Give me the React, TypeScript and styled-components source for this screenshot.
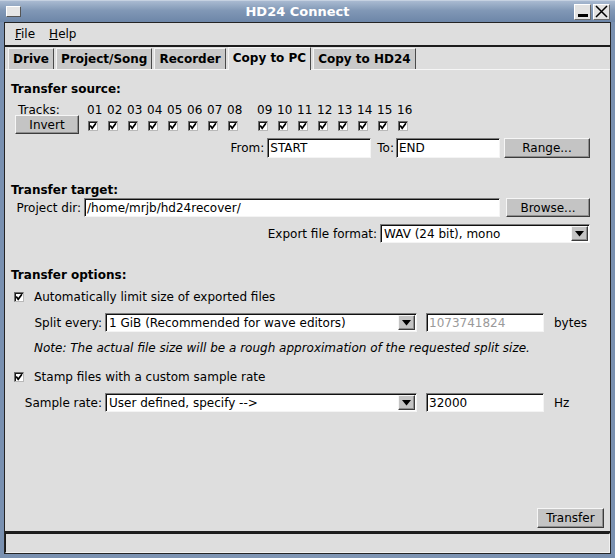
import styled, { createGlobalStyle, css } from 'styled-components';

const GlobalStyle = createGlobalStyle`
  html, body {
    margin: 0;
    padding: 0;
    background: #dedede;
  }
  body {
    font-family: "DejaVu Sans", "Bitstream Vera Sans", sans-serif;
    font-size: 12px;
    color: #000;
  }
  * {
    box-sizing: border-box;
  }
`;

const raised = css`
  border: 1px solid;
  border-color: #f6f6f6 #3c3c3c #3c3c3c #f6f6f6;
  box-shadow: inset -1px -1px 0 #8e8e8e;
`;

const sunken = css`
  border: 1px solid;
  border-color: #7c7c7c #f4f4f4 #f4f4f4 #7c7c7c;
  box-shadow: inset 1px 1px 0 #101010;
`;

const Window = styled.div`
  width: 615px;
  height: 558px;
  display: flex;
  flex-direction: column;
  background: linear-gradient(to right, #7990b0, #8197b5 50%, #7990b0);
`;

const TitleBar = styled.div`
  height: 22px;
  flex: none;
  display: flex;
  align-items: center;
  gap: 2px;
  padding: 0 5px 0 6px;
  background: linear-gradient(#a9bad1, #8198b6 45%, #6d86a8);
  border-top: 1px solid #c5d1e1;
`;

const WinIcon = styled.span`
  width: 15px;
  height: 11px;
  background: #e6e6e6;
  border: 1px solid;
  border-color: #ffffff #555555 #555555 #ffffff;
`;

const Title = styled.div`
  flex: 1;
  text-align: center;
  color: #ffffff;
  font-weight: bold;
  font-size: 13px;
`;

const TitleButton = styled.span`
  width: 17px;
  height: 16px;
  display: flex;
  align-items: center;
  justify-content: center;
  background: #e2e2e2;
  border: 1px solid;
  border-color: #ffffff #6a6a6a #6a6a6a #ffffff;
`;

const Client = styled.div`
  flex: 1;
  display: flex;
  flex-direction: column;
  margin: 0 4px 4px;
  background: #dedede;
  border: 1px solid #242424;
`;

const MenuBar = styled.div`
  height: 24px;
  flex: none;
  display: flex;
  align-items: center;
  padding-left: 3px;
  border-bottom: 2px solid #1c1c1c;
`;

const MenuItem = styled.span`
  padding: 0 7px;
  line-height: 22px;
`;

const TabStrip = styled.div`
  height: 22px;
  flex: none;
  display: flex;
  align-items: flex-end;
  gap: 2px;
  padding-left: 3px;
`;

const Tab = styled.div<{ $active?: boolean }>`
  position: relative;
  z-index: ${(p) => (p.$active ? 1 : 0)};
  height: ${(p) => (p.$active ? 23 : 21)}px;
  margin-bottom: ${(p) => (p.$active ? -1 : 0)}px;
  padding: 0 4px;
  font-weight: bold;
  line-height: ${(p) => (p.$active ? 20 : 21)}px;
  white-space: nowrap;
  background: ${(p) => (p.$active ? '#dedede' : '#c9c9c9')};
  border-top: 1px solid #f4f4f4;
  border-left: 1px solid #f4f4f4;
  border-right: 1px solid #4a4a4a;
`;

const Panel = styled.div`
  flex: 1;
  display: flex;
  flex-direction: column;
  padding-bottom: 3px;
  border-top: 1px solid #f6f6f6;
`;

const SectionTitle = styled.div<{ $top: number }>`
  height: 16px;
  margin-top: ${(p) => p.$top}px;
  padding-left: 6px;
  font-weight: bold;
  line-height: 16px;
`;

const TracksRow = styled.div`
  display: flex;
  margin-top: 6px;
  padding-left: 10px;
`;

const TracksLead = styled.div`
  width: 64px;
  display: flex;
  flex-direction: column;
`;

const TracksLabel = styled.div`
  height: 12px;
  padding-left: 3px;
  line-height: 14px;
`;

const TrackGroup = styled.div<{ $gap: number }>`
  display: flex;
  margin-left: ${(p) => p.$gap}px;
`;

const TrackCell = styled.div`
  width: 20px;
  display: flex;
  flex-direction: column;
`;

const TrackNum = styled.span`
  height: 14px;
  line-height: 14px;
  margin-bottom: 4px;
`;

const Box = styled.span`
  width: 10px;
  height: 10px;
  flex: none;
  display: flex;
  align-items: center;
  justify-content: center;
  margin-left: 1px;
  background: #ffffff;
  border: 1px solid;
  border-color: #6e6e6e #b8b8b8 #b8b8b8 #6e6e6e;
  box-shadow: inset 1px 1px 0 #1a1a1a;
`;

function CheckBox() {
  return (
    <Box>
      <svg width="8" height="8" viewBox="0 0 8 8">
        <path d="M1.2 3.4 L3.2 6.2 L6.9 1.2" fill="none" stroke="#000" strokeWidth="1.7" />
      </svg>
    </Box>
  );
}

const Button = styled.div<{ $width: number; $height?: number; $gap?: number }>`
  width: ${(p) => p.$width}px;
  height: ${(p) => p.$height ?? 20}px;
  margin-left: ${(p) => p.$gap ?? 0}px;
  display: flex;
  align-items: center;
  justify-content: center;
  background: #c4c4c4;
  ${raised}
`;

const Row = styled.div<{ $top: number; $height: number; $right?: boolean }>`
  height: ${(p) => p.$height}px;
  margin-top: ${(p) => p.$top}px;
  display: flex;
  align-items: center;
  justify-content: ${(p) => (p.$right ? 'flex-end' : 'flex-start')};
  padding-right: ${(p) => (p.$right ? 20 : 0)}px;
`;

const FieldLabel = styled.span<{ $gap?: number; $after?: number }>`
  margin-left: ${(p) => p.$gap ?? 0}px;
  margin-right: ${(p) => p.$after ?? 3}px;
  white-space: nowrap;
`;

const FormLabel = styled.span`
  width: 100px;
  padding-right: 3px;
  text-align: right;
  white-space: nowrap;
`;

const TextBox = styled.div<{ $width: number; $gap?: number; $disabled?: boolean }>`
  width: ${(p) => p.$width}px;
  height: 100%;
  margin-left: ${(p) => p.$gap ?? 0}px;
  padding-left: 2px;
  display: flex;
  align-items: center;
  background: #ffffff;
  color: ${(p) => (p.$disabled ? '#9a9a9a' : '#000')};
  white-space: nowrap;
  overflow: hidden;
  ${sunken}
`;

const SelectBox = styled.div<{ $width: number }>`
  width: ${(p) => p.$width}px;
  height: 100%;
  display: flex;
  background: #ffffff;
  ${sunken}
`;

const SelectValue = styled.span`
  flex: 1;
  padding-left: 3px;
  display: flex;
  align-items: center;
  white-space: nowrap;
`;

const SelectArrow = styled.span`
  width: 17px;
  margin: 1px;
  display: flex;
  align-items: center;
  justify-content: center;
  background: #c4c4c4;
  ${raised}
`;

function Dropdown({ width, value }: { width: number; value: string }) {
  return (
    <SelectBox $width={width}>
      <SelectValue>{value}</SelectValue>
      <SelectArrow>
        <svg width="9" height="6" viewBox="0 0 9 6">
          <path d="M0 0 H9 L4.5 5.5 Z" fill="#000" />
        </svg>
      </SelectArrow>
    </SelectBox>
  );
}

const Unit = styled.span`
  margin-left: 10px;
`;

const CheckRow = styled.div<{ $top: number }>`
  height: 16px;
  margin-top: ${(p) => p.$top}px;
  padding-left: 8px;
  display: flex;
  align-items: center;
  gap: 10px;
`;

const Note = styled.div`
  height: 16px;
  margin-top: 8px;
  padding-left: 29px;
  line-height: 16px;
  font-style: italic;
`;

const Footer = styled.div`
  margin-top: auto;
  display: flex;
  justify-content: flex-end;
  padding-right: 6px;
`;

const StatusArea = styled.div`
  flex: none;
  border-top: 2px solid #1e1e1e;
`;

const StatusField = styled.div`
  height: 20px;
  border: 1px solid;
  border-color: #1a1a1a #f2f2f2 #f2f2f2 #1a1a1a;
`;

const tabs = ['Drive', 'Project/Song', 'Recorder', 'Copy to PC', 'Copy to HD24'];

export default function App() {
  return (
    <>
      <GlobalStyle />
      <Window>
        <TitleBar>
          <WinIcon />
          <Title>HD24 Connect</Title>
          <TitleButton>
            <svg width="13" height="12" viewBox="0 0 13 12">
              <rect x="2" y="8" width="10" height="3" fill="#000" />
            </svg>
          </TitleButton>
          <TitleButton>
            <svg width="13" height="13" viewBox="0 0 13 13">
              <path d="M1 1 L12 12 M12 1 L1 12" stroke="#000" strokeWidth="1.5" />
            </svg>
          </TitleButton>
        </TitleBar>
        <Client>
          <MenuBar>
            <MenuItem>
              <u>F</u>ile
            </MenuItem>
            <MenuItem>
              <u>H</u>elp
            </MenuItem>
          </MenuBar>
          <TabStrip>
            {tabs.map((t) => (
              <Tab key={t} $active={t === 'Copy to PC'}>
                {t}
              </Tab>
            ))}
          </TabStrip>
          <Panel>
            <SectionTitle $top={11}>Transfer source:</SectionTitle>
            <TracksRow>
              <TracksLead>
                <TracksLabel>Tracks:</TracksLabel>
                <Button $width={64} $height={19}>
                  Invert
                </Button>
              </TracksLead>
              {[0, 1].map((g) => (
                <TrackGroup key={g} $gap={g === 0 ? 8 : 10}>
                  {Array.from({ length: 8 }, (_, i) => {
                    const n = g * 8 + i + 1;
                    return (
                      <TrackCell key={n}>
                        <TrackNum>{String(n).padStart(2, '0')}</TrackNum>
                        <CheckBox />
                      </TrackCell>
                    );
                  })}
                </TrackGroup>
              ))}
            </TracksRow>
            <Row $top={4} $height={20} $right>
              <FieldLabel>From:</FieldLabel>
              <TextBox $width={104}>START</TextBox>
              <FieldLabel $gap={6} $after={2}>
                To:
              </FieldLabel>
              <TextBox $width={104}>END</TextBox>
              <Button $width={86} $gap={4}>
                Range...
              </Button>
            </Row>

            <SectionTitle $top={24}>Transfer target:</SectionTitle>
            <Row $top={0} $height={19} $right>
              <FieldLabel>Project dir:</FieldLabel>
              <TextBox $width={416}>/home/mrjb/hd24recover/</TextBox>
              <Button $width={84} $height={19} $gap={6}>
                Browse...
              </Button>
            </Row>
            <Row $top={7} $height={19} $right>
              <FieldLabel>Export file format:</FieldLabel>
              <Dropdown width={210} value="WAV (24 bit), mono" />
            </Row>

            <SectionTitle $top={24}>Transfer options:</SectionTitle>
            <CheckRow $top={6}>
              <CheckBox />
              <span>Automatically limit size of exported files</span>
            </CheckRow>
            <Row $top={8} $height={19}>
              <FormLabel>Split every:</FormLabel>
              <Dropdown width={312} value="1 GiB (Recommended for wave editors)" />
              <TextBox $width={118} $gap={9} $disabled>
                1073741824
              </TextBox>
              <Unit>bytes</Unit>
            </Row>
            <Note>Note: The actual file size will be a rough approximation of the requested split size.</Note>
            <CheckRow $top={13}>
              <CheckBox />
              <span>Stamp files with a custom sample rate</span>
            </CheckRow>
            <Row $top={8} $height={19}>
              <FormLabel>Sample rate:</FormLabel>
              <Dropdown width={312} value="User defined, specify -->" />
              <TextBox $width={118} $gap={9}>
                32000
              </TextBox>
              <Unit>Hz</Unit>
            </Row>

            <Footer>
              <Button $width={67} $height={20}>
                Transfer
              </Button>
            </Footer>
          </Panel>
          <StatusArea>
            <StatusField />
          </StatusArea>
        </Client>
      </Window>
    </>
  );
}
